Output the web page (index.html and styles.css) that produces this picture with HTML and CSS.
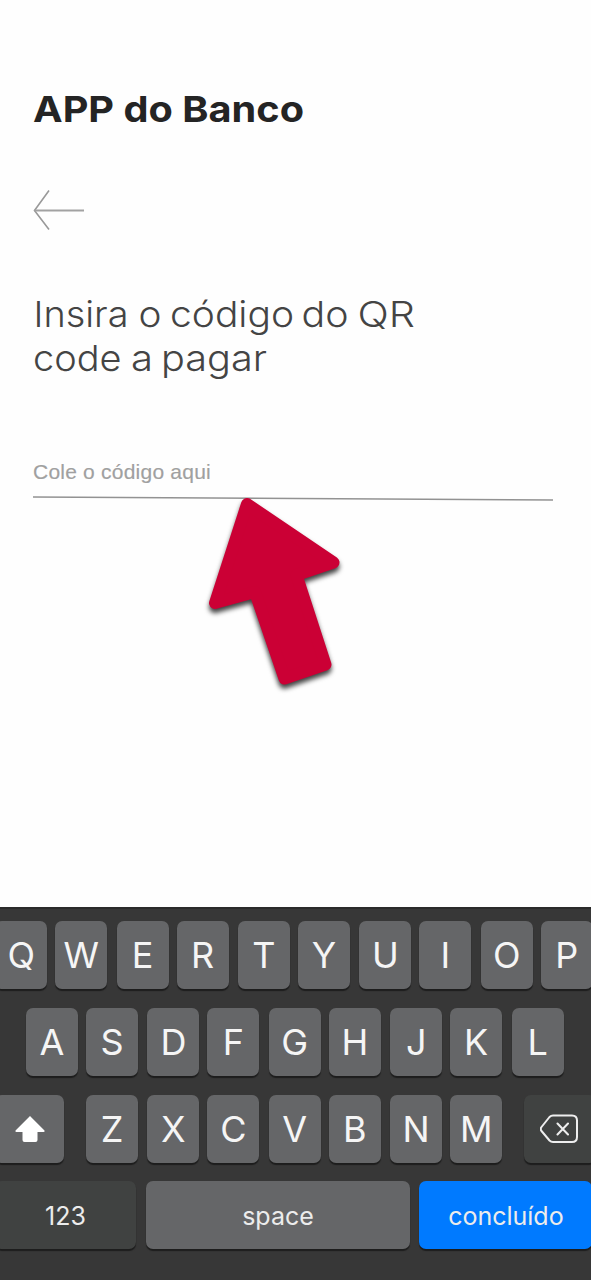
FILE: index.html
```html
<!DOCTYPE html>
<html lang="pt-BR">
<head>
<meta charset="utf-8">
<title>APP do Banco</title>
<link rel="stylesheet" href="styles.css">
</head>
<body>
<div class="screen">
  <main class="content">
    <svg class="brand" width="300" height="44" role="heading" aria-level="1"><text x="0" y="34.5" textLength="271" lengthAdjust="spacingAndGlyphs">APP do Banco</text></svg>
    <svg class="back" width="54" height="44" viewBox="0 0 54 44"><path d="M16 2.5 1.5 22.5 16 41.5"/><path class="shaft" d="M1.5 22.5H51"/></svg>
    <svg class="heading" width="400" height="96" role="heading" aria-level="2"><text x="0.5" y="37" textLength="95" lengthAdjust="spacingAndGlyphs">Insira</text><text x="105.5" y="37" textLength="23" lengthAdjust="spacingAndGlyphs">o</text><text x="137" y="37" textLength="124" lengthAdjust="spacingAndGlyphs">código</text><text x="268.5" y="37" textLength="47" lengthAdjust="spacingAndGlyphs">do</text><text x="324.5" y="37" textLength="57.5" lengthAdjust="spacingAndGlyphs">QR</text><text x="0" y="80.5" textLength="88.500" lengthAdjust="spacingAndGlyphs">code</text><text x="98" y="80.5" textLength="22" lengthAdjust="spacingAndGlyphs">a</text><text x="128" y="80.5" textLength="106" lengthAdjust="spacingAndGlyphs">pagar</text></svg>
    <div class="field">
      <span class="placeholder">Cole o código aqui</span>
      <svg class="underline" width="522" height="8" viewBox="0 0 522 8"><path d="M0 2 520 5"/></svg>
      <svg class="pointer" width="170" height="215" viewBox="190 485 170 215"><path d="M247 504 333.500 562.500 296.500 575 325.500 664.500 284.500 678.500 255 592 215 603Z"/></svg>
    </div>
  </main>
  <div class="keyboard">
    <div class="row row-top">
      <div class="key">Q</div><div class="key">W</div><div class="key">E</div><div class="key">R</div><div class="key">T</div><div class="key">Y</div><div class="key">U</div><div class="key">I</div><div class="key">O</div><div class="key">P</div>
    </div>
    <div class="row row-home">
      <div class="key">A</div><div class="key">S</div><div class="key">D</div><div class="key">F</div><div class="key">G</div><div class="key">H</div><div class="key">J</div><div class="key">K</div><div class="key">L</div>
    </div>
    <div class="row row-bottom">
      <div class="key shift"><svg width="32" height="28" viewBox="0 0 32 28"><path d="M16 1 30.500 15.500Q31 17 29.500 17H23.500V25Q23.500 27 21.500 27H10.500Q8.500 27 8.500 25V17H2.500Q1 17 1.500 15.500Z"/></svg></div>
      <div class="key">Z</div><div class="key">X</div><div class="key">C</div><div class="key">V</div><div class="key">B</div><div class="key">N</div><div class="key">M</div>
      <div class="key dark delete"><svg width="40" height="30" viewBox="0 0 40 30"><path d="M13 1.500H32Q37 1.500 37 6.500V23Q37 28 32 28H13Q11 28 9.500 26.500L1.500 17Q0 15 1.500 13L9.500 3Q11 1.500 13 1.500ZM17.500 9.500 28 20.500M28 9.500 17.500 20.500"/></svg></div>
    </div>
    <div class="row row-space">
      <div class="key dark word numbers">123</div>
      <div class="key word space">space</div>
      <div class="key word done">concluído</div>
    </div>
  </div>
</div>
</body>
</html>
```
FILE: styles.css
```css
* { box-sizing: border-box; }
body { margin: 0; background: #fefefe; }
.screen { width: 591px; height: 1280px; display: flex; flex-direction: column; overflow: hidden; font-family: Inter, "Liberation Sans", sans-serif; }
.content { flex: 1; padding: 87px 33px 0; display: flex; flex-direction: column; align-items: flex-start; }
.content svg { display: block; overflow: visible; flex: none; }
.brand { font-size: 36px; font-weight: 700; fill: #242424; }
.back { margin-top: 57px; fill: none; stroke: #999; stroke-width: 1.6; }
.back .shaft { stroke-width: 2; stroke: #a2a2a2; }
.heading { margin-top: 58px; font-size: 36px; font-weight: 300; fill: #444; }
.field { position: relative; width: 522px; margin-top: 72px; }
.placeholder { display: block; height: 37px; font: 21px/28px "Liberation Sans", Arial, sans-serif; letter-spacing: .22px; color: #a0a0a0; -webkit-text-stroke: .15px #a0a0a0; }
.underline { fill: none; stroke: #929292; stroke-width: 1.4; }
.pointer { position: absolute; left: 157px; top: 27px; fill: #cb0035; stroke: #cb0035; stroke-width: 12; stroke-linejoin: round; filter: drop-shadow(0 4px 2.5px rgba(0, 0, 0, .75)); }
.keyboard { height: 373px; padding-top: 12px; background: #373737; border-top: 2px solid #2b2b2b; display: flex; flex-direction: column; gap: 18.8px; }
.row { display: flex; height: 68px; }
.key { width: 52px; height: 68px; flex: none; margin-right: 8px; border-radius: 7px; background: #656668; box-shadow: 0 2px 1px #1d1d1d; color: #f5f5f5; font-size: 36px; font-weight: 400; display: flex; align-items: center; justify-content: center; }
.row-top { margin-left: -4.8px; }
.row-home { margin-left: 26px; }
.row .key:nth-child(even) { margin-right: 9.4px; }
.row-bottom .key.shift { width: 69px; margin: 0 22px 0 -5px; }
.shift svg { fill: #fff; }
.row-bottom .key.delete { width: 72px; margin-left: 12.8px; margin-right: 0; }
.delete svg { fill: none; stroke: #eee; stroke-width: 2; stroke-linecap: round; stroke-linejoin: round; }
.dark { background: #404241; }
.word { padding-top: 2px; font-size: 25px; font-weight: 400; color: #ececec; }
.row-space .numbers { width: 141px; margin: 0 10px 0 -5px; }
.row-space .space { width: 264px; }
.row-space .done { width: 173px; margin-right: 0; background: #007aff; }
```
